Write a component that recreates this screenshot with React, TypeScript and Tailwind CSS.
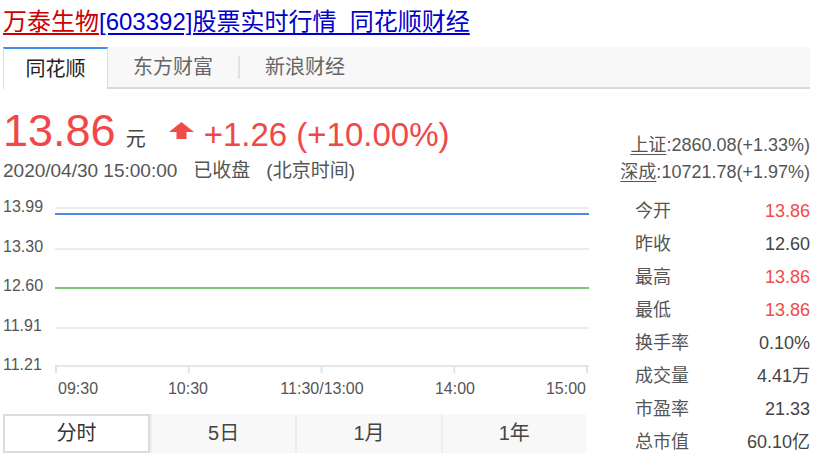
import React from 'react';

const FONT = '"Liberation Sans", "Noto Sans CJK SC", sans-serif';

const indices = [
  { name: '上证', value: '2860.08(+1.33%)' },
  { name: '深成', value: '10721.78(+1.97%)' },
];

const stats = [
  { label: '今开', value: '13.86', up: true },
  { label: '昨收', value: '12.60' },
  { label: '最高', value: '13.86', up: true },
  { label: '最低', value: '13.86', up: true },
  { label: '换手率', value: '0.10%' },
  { label: '成交量', value: '4.41万' },
  { label: '市盈率', value: '21.33' },
  { label: '总市值', value: '60.10亿' },
];

const sources = ['同花顺', '东方财富', '新浪财经'];
const periods = ['分时', '5日', '1月', '1年'];

function UpArrow() {
  return (
    <svg width="25" height="17" viewBox="0 0 25 17" aria-hidden className="block">
      <path d="M12.5 0 L25 10 L17.5 10 L17.5 17 L7.5 17 L7.5 10 L0 10 Z" fill="#f24a48" />
    </svg>
  );
}

function IntradayChart() {
  const grid = [17, 58, 97, 137];
  const yLabels = [
    { y: 15, t: '13.99' },
    { y: 55, t: '13.30' },
    { y: 94, t: '12.60' },
    { y: 134, t: '11.91' },
    { y: 173, t: '11.21' },
  ];
  const ticks = [56, 188.75, 321.5, 454.25, 587];
  return (
    <svg width="590" height="206" viewBox="0 0 590 206" className="block" style={{ fontFamily: FONT }}>
      {grid.map((y) => (
        <line key={y} x1="55" x2="589" y1={y} y2={y} stroke="#ececec" strokeWidth="2" />
      ))}
      <line x1="55" x2="589" y1="175" y2="175" stroke="#e6e6e6" strokeWidth="2" />
      {ticks.map((x) => (
        <line key={x} x1={x} x2={x} y1="175" y2="182" stroke="#e3e3e3" strokeWidth="2" />
      ))}
      <line x1="55" x2="589" y1="23" y2="23" stroke="#4f88e6" strokeWidth="2" />
      <line x1="55" x2="589" y1="97" y2="97" stroke="#7cc47c" strokeWidth="2" />
      {yLabels.map((l) => (
        <text key={l.t} x="3" y={l.y} dominantBaseline="central" fontSize="16" fill="#555">
          {l.t}
        </text>
      ))}
      <g fontSize="16" fill="#555">
        <text x="58" y="197" dominantBaseline="central">09:30</text>
        <text x="188" y="197" dominantBaseline="central" textAnchor="middle">10:30</text>
        <text x="322" y="197" dominantBaseline="central" textAnchor="middle">11:30/13:00</text>
        <text x="455" y="197" dominantBaseline="central" textAnchor="middle">14:00</text>
        <text x="586" y="197" dominantBaseline="central" textAnchor="end">15:00</text>
      </g>
    </svg>
  );
}

export default function App() {
  return (
    <div className="h-[467px] w-[840px] overflow-hidden bg-white" style={{ fontFamily: FONT }}>
      <div className="pl-[3px] pt-[10px] text-[24px] leading-[24px]">
        <a className="text-[#cc0000] underline underline-offset-[3px]">万泰生物</a>
        <a className="text-[#0000cc] underline underline-offset-[3px]">[603392]股票实时行情_同花顺财经</a>
      </div>

      <div className="ml-[3px] mt-[13px] flex h-[42px] w-[807px] border-b-2 border-[#d9d9d9] bg-[#f8f8f8]">
        {sources.map((s, i) =>
          i === 0 ? (
            <div
              key={s}
              className="-mb-[2px] flex h-[42px] w-[105px] items-center justify-center border-l border-t-2 border-r border-l-[#ddd] border-r-[#ddd] border-t-[#3c91e6] bg-white text-[20px] text-[#222]"
            >
              {s}
            </div>
          ) : (
            <div key={s} className="flex items-center">
              <div className="flex w-[130px] items-center justify-center text-[20px] text-[#666]">{s}</div>
              {i === 1 && <div className="h-[23px] w-[2px] bg-[#e2e2e2]" />}
            </div>
          ),
        )}
      </div>

      <div className="flex">
        <div className="w-[600px]">
          <div className="mt-[19px] flex items-baseline pl-[3px] text-[#f04848]">
            <span className="text-[45px] leading-[45px]">13.86</span>
            <span className="ml-[10px] text-[20px] text-[#444]">元</span>
            <span className="ml-[23px] self-start pt-[14px]">
              <UpArrow />
            </span>
            <span className="ml-[10px] text-[33px]">+1.26 (+10.00%)</span>
          </div>
          <div className="mt-0 flex h-[24px] items-center pl-[3px] text-[19px] text-[#555]">
            <span>2020/04/30 15:00:00</span>
            <span className="ml-[16px]">已收盘</span>
            <span className="ml-[16px]">(北京时间)</span>
          </div>
          <div className="mt-[7px]">
            <IntradayChart />
          </div>
          <div className="ml-[3px] mt-[17px] flex h-[39px] w-[583px] bg-[#f8f8f8] text-[20px] text-[#444]">
            {periods.map((p, i) => (
              <div
                key={p}
                className={
                  i === 0
                    ? 'flex w-[147px] items-center justify-center border-2 border-[#dcdcdc] bg-white text-[#333]'
                    : 'flex flex-1 items-center justify-center border-l-2 border-[#eeeeee] first:border-l-0'
                }
              >
                {p}
              </div>
            ))}
          </div>
        </div>

        <div className="w-[210px] pt-[43px] text-[18px] text-[#555]">
          {indices.map((ix) => (
            <div key={ix.name} className="flex h-[27px] items-center justify-end">
              <span className="underline underline-offset-[3px]">{ix.name}</span>
              <span>:{ix.value}</span>
            </div>
          ))}
          <div className="mt-[9px]">
            {stats.map((s) => (
              <div key={s.label} className="flex h-[33px] items-center justify-between pl-[35px]">
                <span className="text-[#555]">{s.label}</span>
                <span className={s.up ? 'text-[#f24a4a]' : 'text-[#444]'}>{s.value}</span>
              </div>
            ))}
          </div>
        </div>
      </div>
    </div>
  );
}
